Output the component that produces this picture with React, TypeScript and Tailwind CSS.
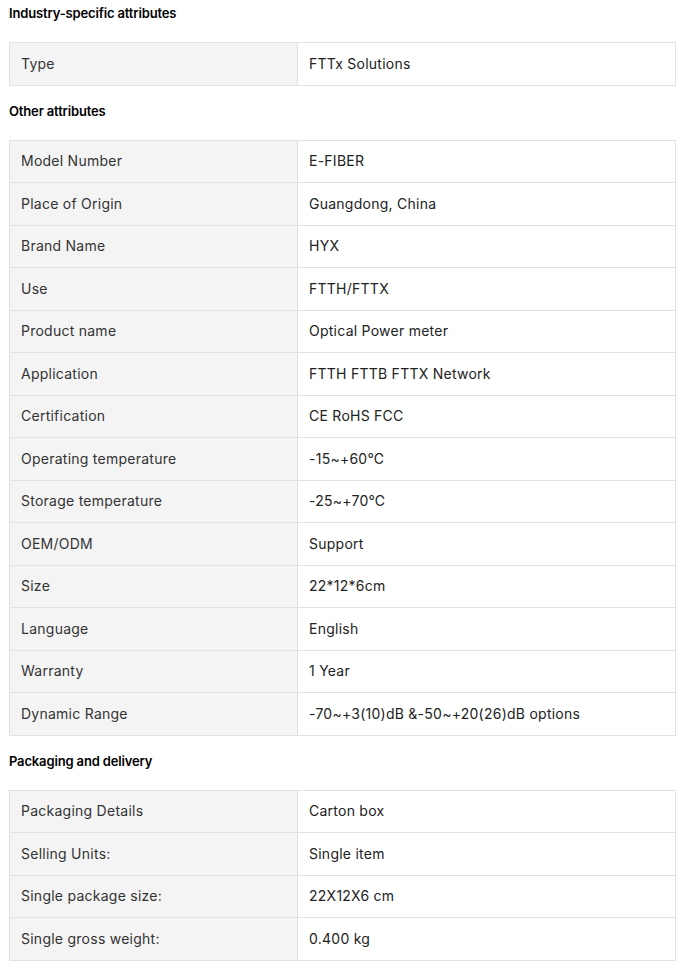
const sections: { title: string; rows: [string, string][] }[] = [
  {
    title: "Industry-specific attributes",
    rows: [["Type", "FTTx Solutions"]],
  },
  {
    title: "Other attributes",
    rows: [
      ["Model Number", "E-FIBER"],
      ["Place of Origin", "Guangdong, China"],
      ["Brand Name", "HYX"],
      ["Use", "FTTH/FTTX"],
      ["Product name", "Optical Power meter"],
      ["Application", "FTTH FTTB FTTX Network"],
      ["Certification", "CE RoHS FCC"],
      ["Operating temperature", "-15~+60℃"],
      ["Storage temperature", "-25~+70℃"],
      ["OEM/ODM", "Support"],
      ["Size", "22*12*6cm"],
      ["Language", "English"],
      ["Warranty", "1 Year"],
      ["Dynamic Range", "-70~+3(10)dB &-50~+20(26)dB options"],
    ],
  },
  {
    title: "Packaging and delivery",
    rows: [
      ["Packaging Details", "Carton box"],
      ["Selling Units:", "Single item"],
      ["Single package size:", "22X12X6 cm"],
      ["Single gross weight:", "0.400 kg"],
    ],
  },
];

export default function App() {
  return (
    <div className="w-[684px] bg-white px-[9px] pt-[3px] font-['Inter','Noto_Sans',sans-serif] text-[14px]">
      {sections.map((s, i) => (
        <div key={s.title} className={i === 0 ? "" : "mt-[15px]"}>
          <h3 className="text-[13px] font-semibold leading-[20px] tracking-[-0.15px] text-black">{s.title}</h3>
          <table className="mt-[19px] w-[667px] table-fixed border-collapse tracking-[0.25px]">
            <tbody>
              {s.rows.map(([k, v]) => (
                <tr key={k} className="h-[42.5px]">
                  <td className="w-[288px] border border-[#e2e2e2] bg-[#f4f4f4] pl-[11px] pr-[12px] leading-[20px] text-[#333]">{k}</td>
                  <td className="border border-[#e2e2e2] bg-white pl-[11px] pr-[12px] leading-[20px] text-[#222]">{v}</td>
                </tr>
              ))}
            </tbody>
          </table>
        </div>
      ))}
    </div>
  );
}
